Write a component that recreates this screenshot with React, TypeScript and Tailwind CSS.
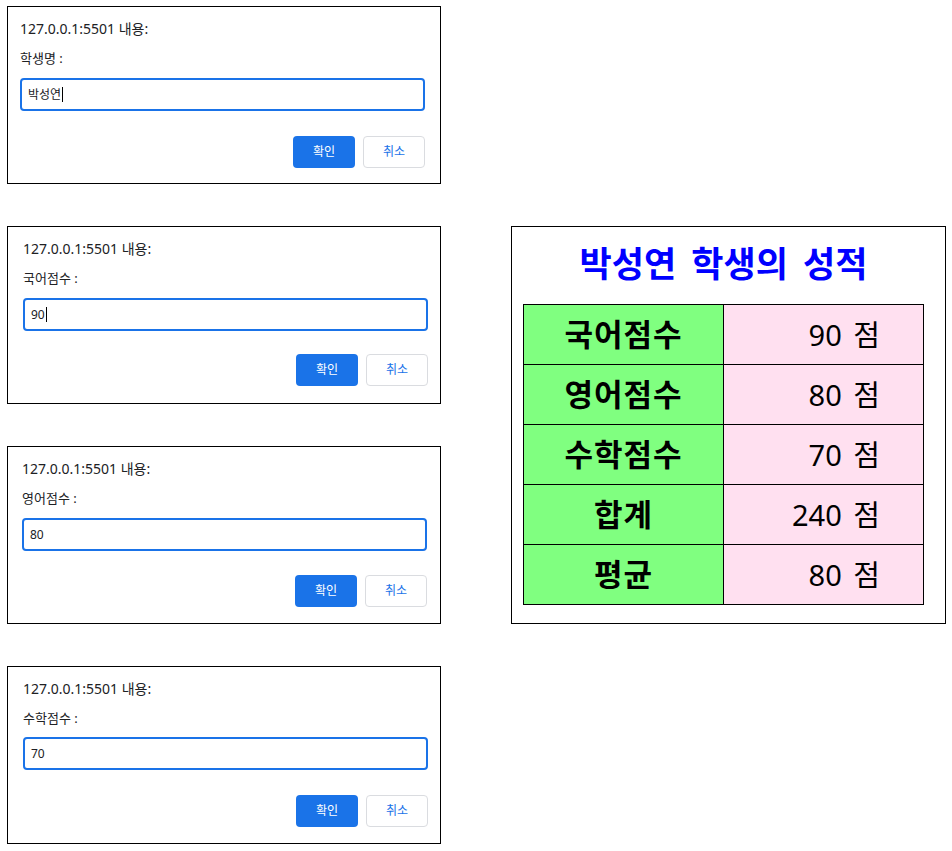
import React from 'react'

const KR = "font-['Noto_Sans','Noto_Sans_CJK_KR',sans-serif]"

interface PromptProps {
    label: string
    value: string
    caret?: boolean
    padLeft: string
    inputTop: string
    btnTop: string
}

// chrome 스타일 prompt 창 하나
const PromptBox: React.FC<PromptProps> = ({ label, value, caret, padLeft, inputTop, btnTop }) => {
    return (
        <div className={`w-[434px] h-[178px] border border-black bg-white ${padLeft} pt-[12px] text-[#202124]`}>
            <div className="w-[405px]">
                <div className="text-[14px] leading-[20px]">127.0.0.1:5501 내용:</div>
                <div className="mt-[11px] text-[13px] leading-[16px]">{label} :</div>
                <div className={`${inputTop} h-[33px] border-2 border-[#1a73e8] rounded-[4px] px-[6px] flex items-center text-[12px]`}>
                    <span>{value}</span>
                    {caret && <span className="inline-block w-[1px] h-[15px] bg-black ml-[1px]"></span>}
                </div>
                <div className={`${btnTop} flex justify-end gap-[8px]`}>
                    <button className="w-[62px] h-[32px] rounded-[4px] bg-[#1a73e8] text-white text-[12px]">확인</button>
                    <button className="w-[62px] h-[32px] rounded-[4px] border border-[#dadce0] bg-white text-[#1a73e8] text-[12px]">취소</button>
                </div>
            </div>
        </div>
    )
}

const scores = [
    { name: '국어점수', value: '90' },
    { name: '영어점수', value: '80' },
    { name: '수학점수', value: '70' },
    { name: '합계', value: '240' },
    { name: '평균', value: '80' },
]

export default function App() {
    return (
        <div className={`flex items-start pl-[7px] pt-[6px] bg-white min-h-screen ${KR}`}>
            {/* 입력 창들 */}
            <div className="flex flex-col gap-[42px]">
                <PromptBox label="학생명" value="박성연" caret padLeft="pl-[12px]" inputTop="mt-[12px]" btnTop="mt-[25px]" />
                <PromptBox label="국어점수" value="90" caret padLeft="pl-[15px]" inputTop="mt-[12px]" btnTop="mt-[23px]" />
                <PromptBox label="영어점수" value="80" padLeft="pl-[14px]" inputTop="mt-[12px]" btnTop="mt-[24px]" />
                <PromptBox label="수학점수" value="70" padLeft="pl-[15px]" inputTop="mt-[11px]" btnTop="mt-[25px]" />
            </div>

            {/* 결과 */}
            <div className="ml-[70px] mt-[220px] w-[435px] h-[398px] border border-black bg-white">
                <div className="ml-[11px] w-[401px]">
                    <h1 className="mt-[15px] text-center text-[35px] leading-[44px] font-bold text-[#0000ff] [word-spacing:6px]">
                        박성연 학생의 성적
                    </h1>
                    <table className="mt-[18px] w-[401px] border-collapse">
                        <tbody>
                            {scores.map(s => (
                                <tr key={s.name} className="h-[60px]">
                                    <td className="w-[200px] border border-black bg-[#80ff80] text-center text-[31px] font-bold text-black tracking-[1px]">
                                        {s.name}
                                    </td>
                                    <td className="border border-black bg-[#ffe0f0] text-right pr-[43px] text-[29px] text-black [word-spacing:4px]">
                                        {s.value} 점
                                    </td>
                                </tr>
                            ))}
                        </tbody>
                    </table>
                </div>
            </div>
        </div>
    )
}
